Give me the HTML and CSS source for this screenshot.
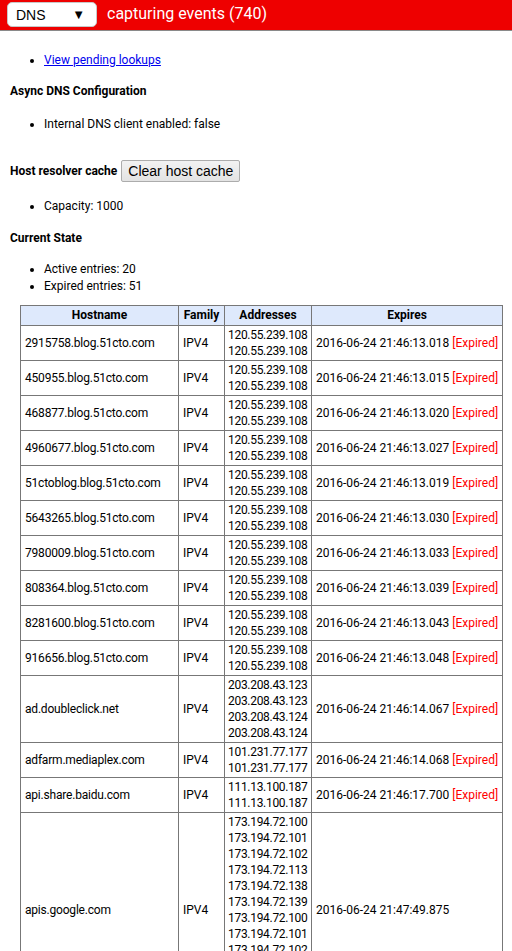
FILE: index.html
```html
<!DOCTYPE html>
<html>
<head>
<meta charset="utf-8">
<link rel="stylesheet" href="styles.css">
</head>
<body>
<div class="topbar">
  <div class="select"><span>DNS</span><span class="arrow">▼</span></div>
  <div class="status">capturing events (740)</div>
</div>
<div class="content">
  <ul class="list l1"><li><a href="#">View pending lookups</a></li></ul>
  <h4 class="h h1">Async DNS Configuration</h4>
  <ul class="list l2"><li>Internal DNS client enabled: false</li></ul>
  <div class="cache-row"><h4 class="h">Host resolver cache</h4><button class="btn">Clear host cache</button></div>
  <ul class="list l3"><li>Capacity: 1000</li></ul>
  <h4 class="h h2">Current State</h4>
  <ul class="list l4"><li>Active entries: 20</li><li>Expired entries: 51</li></ul>
  <table class="dns">
    <colgroup><col class="c1"><col class="c2"><col class="c3"><col class="c4"></colgroup>
    <thead><tr><th>Hostname</th><th>Family</th><th>Addresses</th><th>Expires</th></tr></thead>
    <tbody>
      <tr><td>2915758.blog.51cto.com</td><td>IPV4</td><td>120.55.239.108<br>120.55.239.108</td><td>2016-06-24 21:46:13.018 <span class="exp">[Expired]</span></td></tr>
      <tr><td>450955.blog.51cto.com</td><td>IPV4</td><td>120.55.239.108<br>120.55.239.108</td><td>2016-06-24 21:46:13.015 <span class="exp">[Expired]</span></td></tr>
      <tr><td>468877.blog.51cto.com</td><td>IPV4</td><td>120.55.239.108<br>120.55.239.108</td><td>2016-06-24 21:46:13.020 <span class="exp">[Expired]</span></td></tr>
      <tr><td>4960677.blog.51cto.com</td><td>IPV4</td><td>120.55.239.108<br>120.55.239.108</td><td>2016-06-24 21:46:13.027 <span class="exp">[Expired]</span></td></tr>
      <tr><td>51ctoblog.blog.51cto.com</td><td>IPV4</td><td>120.55.239.108<br>120.55.239.108</td><td>2016-06-24 21:46:13.019 <span class="exp">[Expired]</span></td></tr>
      <tr><td>5643265.blog.51cto.com</td><td>IPV4</td><td>120.55.239.108<br>120.55.239.108</td><td>2016-06-24 21:46:13.030 <span class="exp">[Expired]</span></td></tr>
      <tr><td>7980009.blog.51cto.com</td><td>IPV4</td><td>120.55.239.108<br>120.55.239.108</td><td>2016-06-24 21:46:13.033 <span class="exp">[Expired]</span></td></tr>
      <tr><td>808364.blog.51cto.com</td><td>IPV4</td><td>120.55.239.108<br>120.55.239.108</td><td>2016-06-24 21:46:13.039 <span class="exp">[Expired]</span></td></tr>
      <tr><td>8281600.blog.51cto.com</td><td>IPV4</td><td>120.55.239.108<br>120.55.239.108</td><td>2016-06-24 21:46:13.043 <span class="exp">[Expired]</span></td></tr>
      <tr><td>916656.blog.51cto.com</td><td>IPV4</td><td>120.55.239.108<br>120.55.239.108</td><td>2016-06-24 21:46:13.048 <span class="exp">[Expired]</span></td></tr>
      <tr><td>ad.doubleclick.net</td><td>IPV4</td><td>203.208.43.123<br>203.208.43.123<br>203.208.43.124<br>203.208.43.124</td><td>2016-06-24 21:46:14.067 <span class="exp">[Expired]</span></td></tr>
      <tr><td>adfarm.mediaplex.com</td><td>IPV4</td><td>101.231.77.177<br>101.231.77.177</td><td>2016-06-24 21:46:14.068 <span class="exp">[Expired]</span></td></tr>
      <tr><td>api.share.baidu.com</td><td>IPV4</td><td>111.13.100.187<br>111.13.100.187</td><td>2016-06-24 21:46:17.700 <span class="exp">[Expired]</span></td></tr>
      <tr><td>apis.google.com</td><td>IPV4</td><td>173.194.72.100<br>173.194.72.101<br>173.194.72.102<br>173.194.72.113<br>173.194.72.138<br>173.194.72.139<br>173.194.72.100<br>173.194.72.101<br>173.194.72.102<br>173.194.72.113<br>173.194.72.138<br>173.194.72.139</td><td>2016-06-24 21:47:49.875</td></tr>
    </tbody>
  </table>
</div>
</body>
</html>
```
FILE: styles.css
```css
html, body {
  margin: 0;
  padding: 0;
  background: #fff;
}
body {
  font-family: Roboto, "Noto Sans", sans-serif;
  font-size: 12px;
  color: #000;
}
.topbar {
  height: 30px;
  background: #ee0000;
  border-bottom: 1px solid #8a8a8a;
  display: flex;
  align-items: flex-start;
}
.select {
  margin: 2px 0 0 7px;
  width: 90px;
  height: 25px;
  box-sizing: border-box;
  background: #fff;
  border: 1px solid #c8c8c8;
  border-radius: 5px;
  display: flex;
  align-items: center;
  justify-content: space-between;
  padding: 0 11px 0 8px;
  font-family: "Liberation Sans", Arial, sans-serif;
  font-size: 14px;
  color: #000;
}
.arrow {
  font-size: 13px;
}
.status {
  margin: 3px 0 0 10px;
  color: #fff;
  font-size: 16px;
  line-height: 22px;
}
.content {
  padding: 0 10px;
}
.list {
  margin: 0;
  padding-left: 34px;
  line-height: 17px;
}
.list a {
  color: #0000ee;
}
.l1 { margin-top: 21px; }
.h {
  margin: 0;
  font-size: 12px;
  font-weight: bold;
  line-height: 16px;
}
.h1 { margin-top: 14px; }
.l2 { margin-top: 17px; }
.cache-row {
  margin-top: 27px;
  display: flex;
  align-items: center;
  gap: 4px;
  height: 22px;
}
.btn {
  font-family: "Liberation Sans", Arial, sans-serif;
  font-size: 14px;
  height: 22px;
  padding: 0 6px;
  border: 1px solid #acacac;
  border-radius: 2px;
  background: linear-gradient(#f2f2f2, #e3e3e3);
  color: #000;
}
.l3 { margin-top: 16px; }
.h2 { margin-top: 15px; }
.l4 { margin-top: 15px; }
.dns {
  margin: 10px 0 0 10px;
  border-collapse: collapse;
  table-layout: fixed;
  width: 483px;
  border: 1px solid #777;
}
.c1 { width: 158px; }
.c2 { width: 46px; }
.c3 { width: 87px; }
.c4 { width: 191px; }
.dns th {
  background: #dee9fc;
  border: 1px solid #777;
  font-weight: bold;
  line-height: 17px;
  padding: 1px 4px;
  text-align: center;
}
.dns td {
  border: 1px solid #777;
  line-height: 16px;
  padding: 1px 4px;
  vertical-align: middle;
  white-space: nowrap;
  overflow: hidden;
}
.dns td:nth-child(1) {
  letter-spacing: -0.2px;
}
.dns td:nth-child(3) {
  padding: 1px 3px;
  letter-spacing: -0.3px;
}
.exp {
  color: #ff0000;
}
```
